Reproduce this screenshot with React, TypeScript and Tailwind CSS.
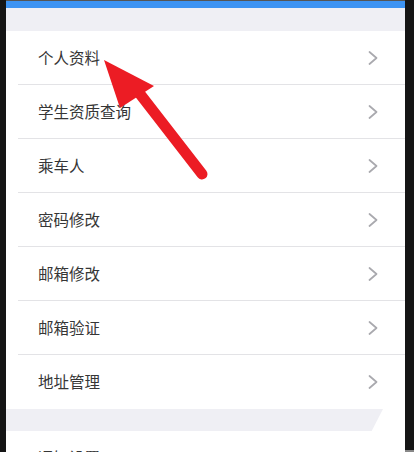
const items = ['个人资料', '学生资质查询', '乘车人', '密码修改', '邮箱修改', '邮箱验证', '地址管理']

const font = { fontFamily: '"Noto Sans CJK SC", "Noto Sans", sans-serif' }

function Chevron() {
  return (
    <svg width="10" height="14" viewBox="0 0 10 14" fill="none">
      <polyline points="1.5,1 8.5,7 1.5,13" stroke="#a9a9ae" strokeWidth="1.7" strokeLinecap="round" strokeLinejoin="round" />
    </svg>
  )
}

function Row({ label, last }: { label: string; last?: boolean }) {
  return (
    <div className="pl-3 shrink-0">
      <div className={`h-[54px] flex items-center justify-between pl-5 pr-[27px] ${last ? '' : 'border-b border-[#e3e3e6]'}`}>
        <span className="text-[15.5px] text-[#363636]">{label}</span>
        <Chevron />
      </div>
    </div>
  )
}

export default function App() {
  return (
    <div className="w-[414px] h-[452px] bg-[#151515] flex overflow-hidden" style={font}>
      <div className="relative ml-[6px] w-[399px] h-full bg-white flex flex-col overflow-hidden">
        <div className="h-[1px] shrink-0 bg-[#555]" />
        <div className="h-[7px] shrink-0 bg-[#3d93f2]" />
        <div className="h-[23px] shrink-0 bg-[#efeff4]" />
        {items.map((item, i) => (
          <Row key={item} label={item} last={i === items.length - 1} />
        ))}
        <div className="h-[22px] shrink-0 bg-[#efeff4] mr-[22px]" style={{ clipPath: 'polygon(0 0, 100% 0, 97% 100%, 0 100%)' }} />
        <div className="pl-8 pt-[15px] shrink-0 text-[15.5px] text-[#363636]">通知设置</div>

        {/* red arrow */}
        <svg className="absolute left-0 top-0" width="399" height="452" viewBox="0 0 399 452">
          <line x1="134" y1="94" x2="196" y2="174" stroke="#ec1c24" strokeWidth="11" strokeLinecap="round" />
          <polygon points="98,60 148,86 114,108" fill="#ec1c24" />
        </svg>
      </div>
      <div className="flex-1 border-b-2 border-[#888]" />
    </div>
  )
}
